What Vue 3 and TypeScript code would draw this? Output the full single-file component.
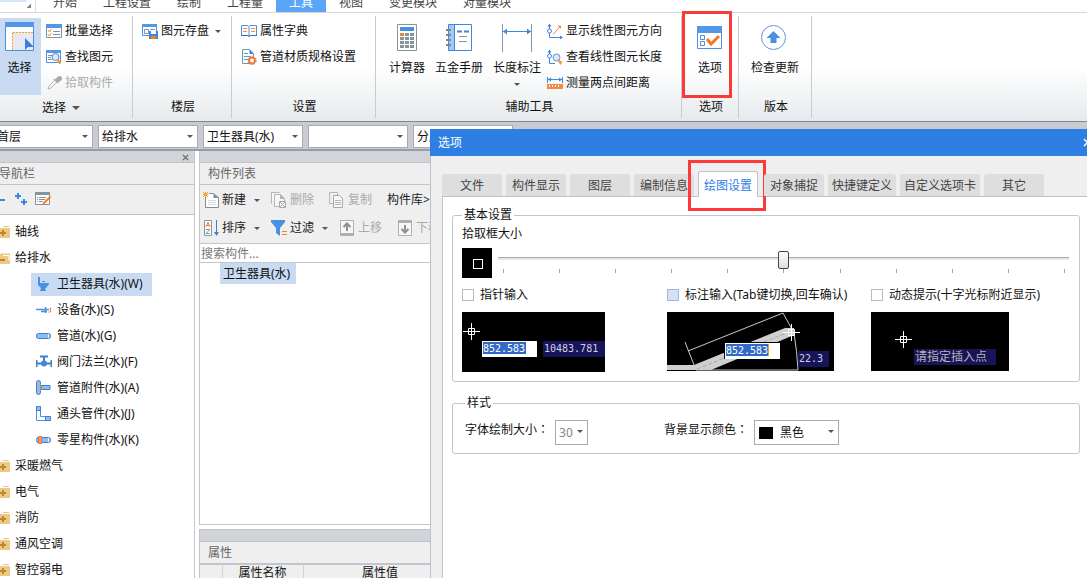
<script setup lang="ts">
import { ref } from 'vue'

interface Item { icon: string; label: string; disabled?: boolean; drop?: boolean }

const menuTabs = ['开始', '工程设置', '绘制', '工程量', '工具', '视图', '变更模块', '对量模块']
const activeMenu = ref('工具')

const selectTools: Item[] = [
  { icon: 'batch', label: '批量选择' },
  { icon: 'find', label: '查找图元' },
  { icon: 'pick', label: '拾取构件', disabled: true },
]
const storeTools: Item[] = [{ icon: 'store', label: '图元存盘', drop: true }]
const settingTools: Item[] = [
  { icon: 'book', label: '属性字典' },
  { icon: 'spec', label: '管道材质规格设置' },
]
const bigTools: Item[] = [
  { icon: 'calc', label: '计算器' },
  { icon: 'manual', label: '五金手册' },
  { icon: 'length', label: '长度标注', drop: true },
]
const lineTools: Item[] = [
  { icon: 'direction', label: '显示线性图元方向' },
  { icon: 'linelen', label: '查看线性图元长度' },
  { icon: 'measure', label: '测量两点间距离' },
]

const combos = [
  { name: '楼层', value: '首层' },
  { name: '专业', value: '给排水' },
  { name: '构件类型', value: '卫生器具(水)' },
  { name: '构件', value: '' },
  { name: '分层', value: '分层1' },
]

const children: Item[] = [
  { icon: 'sanitary', label: '卫生器具(水)(W)' },
  { icon: 'device', label: '设备(水)(S)' },
  { icon: 'pipe', label: '管道(水)(G)' },
  { icon: 'valve', label: '阀门法兰(水)(F)' },
  { icon: 'fitting', label: '管道附件(水)(A)' },
  { icon: 'elbow', label: '通头管件(水)(J)' },
  { icon: 'misc', label: '零星构件(水)(K)' },
]
const tree = [
  { label: '轴线', open: false },
  { label: '给排水', open: true },
  { label: '采暖燃气', open: false },
  { label: '电气', open: false },
  { label: '消防', open: false },
  { label: '通风空调', open: false },
  { label: '智控弱电', open: false },
]
const activeChild = ref('卫生器具(水)(W)')

const listRows: Item[][] = [
  [
    { icon: 'new', label: '新建', drop: true },
    { icon: 'delete', label: '删除', disabled: true },
    { icon: 'copy', label: '复制', disabled: true },
    { icon: '', label: '构件库>>' },
  ],
  [
    { icon: 'sort', label: '排序', drop: true },
    { icon: 'filter', label: '过滤', drop: true },
    { icon: 'up', label: '上移', disabled: true },
    { icon: 'down', label: '下移', disabled: true },
  ],
]

const dialogTabs = ['文件', '构件显示', '图层', '编制信息', '绘图设置', '对象捕捉', '快捷键定义', '自定义选项卡', '其它']
const activeTab = ref('绘图设置')
const pickSize = ref(50)
</script>

<template>
  <svg class="defs" aria-hidden="true">
    <symbol id="i-select" viewBox="0 0 32 30">
      <path d="M1.500 .5h28v28h-28z" fill="#fff" stroke="#4a90e2" />
      <path d="M8 10h21v18H8z" fill="#e6e9f5" />
      <path d="M8.500 28V10.500H29" fill="none" stroke="#f5a623" stroke-dasharray="2 1" />
      <path d="M1 0h29v5H1z" fill="#5298e8" />
      <path d="M21 16v12l3-3h6z" fill="#3b7fd6" />
    </symbol>
    <symbol id="i-batch" viewBox="0 0 16 16">
      <path d="M.5 1.500h15v13H.5z" fill="#fff" stroke="#7c93a8" />
      <path d="M0 1h16v4H0z" fill="#5298e8" />
      <path d="M2 7l1.500 2L5.500 6M2 11l1.500 2 2-3" fill="none" stroke="#f08a3c" />
      <path d="M7 8.500h7M7 11.500h7" stroke="#7c93a8" />
    </symbol>
    <symbol id="i-find" viewBox="0 0 16 16">
      <path d="M.5 1.500h14v12H.5z" fill="#fff" stroke="#4a90e2" />
      <path d="M0 1h15v3H0z" fill="#5298e8" />
      <path d="M2 6.500h4M2 8.500h3M2 10.500h4" stroke="#7c93a8" />
      <circle cx="9.500" cy="8" r="3.500" fill="#dbe9fb" stroke="#5b83c4" />
      <path d="M12 10l3.500 3.500-2 2-2.500-3.500z" fill="#f59a23" />
    </symbol>
    <symbol id="i-pick" viewBox="0 0 16 16">
      <path d="M2 14l1-3 6-6 2 2-6 6z" fill="#f3f3f3" stroke="#b8b8b8" />
      <path d="M8 4l4 4M9.500 5L12 2.500q2-1.500 3 0t-1 3L11.500 7z" fill="#aaa" stroke="#aaa" stroke-width="1.500" />
    </symbol>
    <symbol id="i-store" viewBox="0 0 16 16">
      <path d="M.5 1.500h14v11H.5z" fill="#fff" stroke="#4a90e2" />
      <path d="M0 1h15v3H0z" fill="#5298e8" />
      <path d="M2.500 6.500h4v4h-4zM8 6.500h5" fill="none" stroke="#7c93a8" />
      <path d="M7 8h9v8H7z" fill="#3f86dc" />
      <path d="M9 8h5v3H9z" fill="#fff" />
      <path d="M9 13h5v3H9z" fill="#f58220" />
    </symbol>
    <symbol id="i-book" viewBox="0 0 16 16">
      <path d="M.5 2.500H7l1 1 1-1h6.500v10H9l-1 1-1-1H.5zM8 3.500v10" fill="#fff" stroke="#4a90e2" />
      <path d="M2 5.500h4M2 8.500h4M10 5.500h4M10 8.500h4" stroke="#ee8a45" />
      <path d="M0 12.500h7l1 1 1-1h7" fill="none" stroke="#2f6cc0" />
    </symbol>
    <symbol id="i-spec" viewBox="0 0 16 16">
      <path d="M1.500 .5h7l4 4v10h-11z" fill="#fff" stroke="#6f97b5" />
      <path d="M8.500 0v5h4z" fill="#3f86dc" />
      <path d="M3 4.500h4M3 7.500h6M3 10.500h4" stroke="#5298c8" />
      <circle cx="11" cy="11.500" r="3" fill="#fff" stroke="#f07a38" stroke-width="2" />
      <circle cx="11" cy="11.500" r="4.300" fill="none" stroke="#f07a38" stroke-dasharray="1.500 1.900" />
    </symbol>
    <symbol id="i-calc" viewBox="0 0 30 30">
      <path d="M5.500 1.500h19v26h-19z" fill="#fff" stroke="#8595a0" />
      <path d="M8 4h14v4H8z" fill="#4a90e2" />
      <path d="M8 10h4v3H8z" fill="#f58220" />
      <path d="M13 10h4v3h-4zM18 10h4v3h-4zM8 14h4v3H8zM13 14h4v3h-4zM18 14h4v3h-4zM8 18h4v3H8zM13 18h4v3h-4zM18 18h4v3h-4zM8 22h4v3H8zM13 22h4v3h-4zM18 22h4v3h-4z" fill="#86949c" />
    </symbol>
    <symbol id="i-manual" viewBox="0 0 30 30">
      <path d="M4.500 1.500h23v26h-23z" fill="#fff" stroke="#3f86dc" />
      <path d="M5 2h5v25H5z" fill="#a5c8f2" />
      <path d="M10.500 1v27" stroke="#3f86dc" />
      <path d="M2 7h5M2 12h5M2 17h5M2 22h5" stroke="#7a8790" stroke-width="2" />
      <path d="M13 8.500h5M20 8.500h5" stroke="#3f86dc" stroke-width="2" />
      <path d="M15 13.500h8M15 18.500h8" stroke="#86949c" />
    </symbol>
    <symbol id="i-length" viewBox="0 0 32 30">
      <path d="M1.500 1v28M30.500 1v28" stroke="#8b959c" />
      <path d="M2 8.500h28" stroke="#3b8ae0" />
      <path d="M2 8.500l4-3v6zM30 8.500l-4-3v6z" fill="#3b8ae0" />
    </symbol>
    <symbol id="i-direction" viewBox="0 0 16 16">
      <path d="M2.500 1v13.500H15" fill="none" stroke="#3f86dc" />
      <path d="M.5 3.500l2-3 2 3zM13 12.500l3 2-3 2z" fill="#3f86dc" />
      <circle cx="2.500" cy="8" r="2" fill="#fff" stroke="#3f86dc" />
      <path d="M6 11.500L13 3.500" stroke="#f08a45" />
      <path d="M10.500 2.500H14V6z" fill="#f08a45" />
    </symbol>
    <symbol id="i-linelen" viewBox="0 0 16 16">
      <path d="M2.500 1v13.500H8" fill="none" stroke="#3f86dc" />
      <path d="M.5 3.500l2-3 2 3z" fill="#3f86dc" />
      <circle cx="2.500" cy="7" r="2" fill="#fff" stroke="#3f86dc" />
      <circle cx="9.500" cy="8.500" r="3.500" fill="#dbe6fa" stroke="#6b8fd0" />
      <path d="M12 11l3.500 2-2 3-2.500-3.500z" fill="#f59a23" />
    </symbol>
    <symbol id="i-measure" viewBox="0 0 16 16">
      <path d="M.5 2v6M15.500 2v6M1 4.500h14" stroke="#3f86dc" />
      <path d="M1 4.500l3-2v4zM15 4.500l-3-2v4z" fill="#3f86dc" />
      <path d="M0 9h16v5H0z" fill="#f08a45" />
      <path d="M2 11h12" stroke="#fff" stroke-dasharray="1 2" stroke-width="2" />
    </symbol>
    <symbol id="i-options" viewBox="0 0 30 30">
      <path d="M2.500 3.500h24v22h-24z" fill="#fff" stroke="#4a90e2" />
      <path d="M2 3h25v7H2z" fill="#5298e8" />
      <path d="M5.500 12.500h4v4h-4zM5.500 18.500h4v4h-4z" fill="#fff" stroke="#4a90e2" />
      <path d="M12 16l4 5 8-8" fill="none" stroke="#f07828" stroke-width="3" />
    </symbol>
    <symbol id="i-update" viewBox="0 0 30 30">
      <circle cx="13.500" cy="14.500" r="12" fill="#fff" stroke="#5f95dc" />
      <path d="M13.500 8l7 7h-4v5h-6v-5h-4z" fill="#4a90e2" />
    </symbol>
    <symbol id="i-plus" viewBox="0 0 16 16">
      <path d="M1 5h6M4 2v6M7 11h6M10 8v6" stroke="#3f86dc" stroke-width="2" />
    </symbol>
    <symbol id="i-edit" viewBox="0 0 16 16">
      <path d="M.5 1.500h14v12H.5z" fill="#fff" stroke="#86949c" />
      <path d="M0 1h15v3H0z" fill="#86949c" />
      <path d="M2 6.500h1M4 6.500h7M2 8.500h1M4 8.500h6M2 10.500h1M4 10.500h4" stroke="#86949c" />
      <path d="M8 13L15.500 5.500" stroke="#f58220" stroke-width="2" />
    </symbol>
    <symbol id="i-folder" viewBox="0 0 16 16">
      <path d="M9 2.500h6" stroke="#eac27d" />
      <path d="M0 4h16v10H0z" fill="#eec986" />
      <path d="M6 9h6M9 6v6" stroke="#b98a2c" stroke-width="2" />
    </symbol>
    <symbol id="i-folder-open" viewBox="0 0 16 16">
      <path d="M7 3h9v10H7z" fill="#f5dfae" />
      <path d="M0 4h16v10H0z" fill="#eec986" />
      <path d="M9 5.500h6v5" fill="none" stroke="#fff" />
      <path d="M5 10h6" stroke="#b98a2c" stroke-width="2" />
    </symbol>
    <symbol id="i-sanitary" viewBox="0 0 16 16">
      <path d="M2 1h2v7H2zM2 7h11v1l-3 4H9l1 3H4l1-3-3-3zM6 5h3v1H6z" fill="#4a90e2" />
    </symbol>
    <symbol id="i-device" viewBox="0 0 16 16">
      <path d="M0 7.500h13M5 9.500h6M9.500 5v6" stroke="#4a90e2" stroke-width="1.500" />
      <path d="M12.500 10h2V5.500" fill="none" stroke="#f07a38" />
    </symbol>
    <symbol id="i-pipe" viewBox="0 0 16 16">
      <rect x=".5" y="5.500" width="14" height="5" rx="2" fill="#8fbdf0" stroke="#3f7fd0" />
      <path d="M12.500 6v4" stroke="#fff" />
    </symbol>
    <symbol id="i-valve" viewBox="0 0 16 16">
      <path d="M4 2.500h8M8 2v6M.5 6v7M15.500 6v7M1 9.500h14" stroke="#3f7fd0" stroke-width="2" />
      <circle cx="8" cy="9.500" r="3" fill="#3f86dc" />
    </symbol>
    <symbol id="i-fitting" viewBox="0 0 16 16">
      <rect x=".5" y=".5" width="4" height="14" rx="2" fill="#8fbdf0" stroke="#3f7fd0" />
      <path d="M5 5.500h9v4H5z" fill="#8fbdf0" stroke="#3f7fd0" />
      <path d="M4.500 4v7" stroke="#f07a38" />
    </symbol>
    <symbol id="i-elbow" viewBox="0 0 16 16">
      <path d="M.5 1.500h4v9h9v4H.5z" fill="#fff" stroke="#4a90e2" />
      <path d="M.5 .5h4v4h-4zM9.500 10.500h5v4h-5z" fill="#8fbdf0" stroke="#3f7fd0" />
    </symbol>
    <symbol id="i-misc" viewBox="0 0 16 16">
      <rect x=".5" y="5.500" width="14" height="5" rx="2" fill="#8fbdf0" stroke="#3f7fd0" />
      <path d="M2.500 4.500h3v7h-3z" fill="#f3a078" stroke="#e07840" />
      <path d="M12.500 6v4" stroke="#fff" />
    </symbol>
    <symbol id="i-new" viewBox="0 0 16 16">
      <path d="M2.500 1.500h8l5 4v10h-13z" fill="#fff" stroke="#7f8d96" />
      <path d="M10.500 1.500v4.500h5z" fill="#7f8d96" />
      <path d="M5 8.500h8M5 10.500h8M5 12.500h8" stroke="#d5d9dc" />
      <path d="M0 0h6v5H0z" fill="#efefef" />
      <path d="M0 0l5 5M5 0L0 5M2.500 0v5M0 2.500h5" stroke="#f5a623" />
    </symbol>
    <symbol id="i-delete" viewBox="0 0 16 16">
      <path d="M.5 11.500v-11h8M3.500 2.500h6l4 4v8h-10z" fill="#f7f7f7" stroke="#b5b5b5" />
      <path d="M9 2v5h5z" fill="#b5b5b5" />
      <path d="M8.500 9.500h6v6h-6zM9 10l5 5M14 10l-5 5" fill="#f7f7f7" stroke="#a9a9a9" />
    </symbol>
    <symbol id="i-copy" viewBox="0 0 16 16">
      <path d="M.5 11.500v-11h8v3M.5 11.500H4" fill="none" stroke="#b5b5b5" />
      <path d="M4.500 3.500h6l3 3v9h-9z" fill="#f7f7f7" stroke="#a9a9a9" />
      <path d="M6 8.500h6M6 10.500h6M6 12.500h6" stroke="#b5b5b5" />
    </symbol>
    <symbol id="i-sort" viewBox="0 0 16 16">
      <path d="M1.500 .5h7v15h-7z" fill="#fff" stroke="#86949c" />
      <path d="M3 7l2-5 2 5M4 5.500h2" fill="none" stroke="#f07a38" />
      <path d="M3 9.500h4l-4 4h4" fill="none" stroke="#86949c" />
      <path d="M13.500 0v13" stroke="#3b7fd6" />
      <path d="M11 12h5l-2.500 4z" fill="#3b7fd6" />
    </symbol>
    <symbol id="i-filter" viewBox="0 0 16 16">
      <path d="M0 0h14v2L9 8v8l-4-3V8L0 2z" fill="#4a90e2" />
      <path d="M11 11.500h5M11 14.500h5" stroke="#f58220" />
    </symbol>
    <symbol id="i-up" viewBox="0 0 16 16">
      <path d="M1.500 .5h13v14h-13z" fill="#f7f7f7" stroke="#b0b0b0" />
      <path d="M1 13h14v3H1z" fill="#b0b0b0" />
      <path d="M8 11V4M4.500 7L8 3.500 11.500 7" fill="none" stroke="#8f8f8f" stroke-width="2" />
    </symbol>
    <symbol id="i-down" viewBox="0 0 16 16">
      <path d="M1.500 .5h13v15h-13z" fill="#f7f7f7" stroke="#b0b0b0" />
      <path d="M1 0h14v3H1z" fill="#b0b0b0" />
      <path d="M8 5v7M4.500 9L8 12.500 11.500 9" fill="none" stroke="#8f8f8f" stroke-width="2" />
    </symbol>
    <symbol id="i-cross" viewBox="0 0 18 18">
      <path d="M1 9.500h17M9.500 1v17" stroke="#fff" />
      <path d="M6.500 6.500h6v6h-6z" fill="none" stroke="#fff" />
    </symbol>
  </svg>

  <div class="app">
    <nav class="menu">
      <div class="logo"></div>
      <button
        v-for="t in menuTabs" :key="t" class="menu-tab" :class="{ active: t === activeMenu }"
        @click="activeMenu = t"
      ><span>{{ t }}</span></button>
    </nav>

    <header class="ribbon">
      <section class="group g-select">
        <div class="tools">
          <button class="big pressed"><svg class="ic30"><use href="#i-select" /></svg>选择</button>
          <div class="stack">
            <button v-for="t in selectTools" :key="t.label" class="small" :disabled="t.disabled">
              <svg class="ic16"><use :href="'#i-' + t.icon" /></svg>{{ t.label }}
            </button>
          </div>
        </div>
        <h2>选择<i class="caret wide"></i></h2>
      </section>
      <section class="group g-store">
        <div class="tools">
          <div class="stack">
            <button v-for="t in storeTools" :key="t.label" class="small">
              <svg class="ic16"><use :href="'#i-' + t.icon" /></svg>{{ t.label }}<i class="caret"></i>
            </button>
          </div>
        </div>
        <h2>楼层</h2>
      </section>
      <section class="group g-setting">
        <div class="tools">
          <div class="stack">
            <button v-for="t in settingTools" :key="t.label" class="small">
              <svg class="ic16"><use :href="'#i-' + t.icon" /></svg>{{ t.label }}
            </button>
          </div>
        </div>
        <h2>设置</h2>
      </section>
      <section class="group g-aux">
        <div class="tools">
          <button v-for="t in bigTools" :key="t.label" class="big">
            <svg class="ic30"><use :href="'#i-' + t.icon" /></svg>{{ t.label }}<i v-if="t.drop" class="caret"></i>
          </button>
          <div class="stack">
            <button v-for="t in lineTools" :key="t.label" class="small">
              <svg class="ic16"><use :href="'#i-' + t.icon" /></svg>{{ t.label }}
            </button>
          </div>
        </div>
        <h2>辅助工具</h2>
      </section>
      <section class="group g-options">
        <div class="tools centered">
          <button class="big"><svg class="ic30"><use href="#i-options" /></svg>选项</button>
        </div>
        <h2>选项</h2>
        <span class="mark mark-ribbon"></span>
      </section>
      <section class="group g-version">
        <div class="tools centered">
          <button class="big"><svg class="ic30"><use href="#i-update" /></svg>检查更新</button>
        </div>
        <h2>版本</h2>
      </section>
    </header>

    <div class="combobar">
      <span v-for="c in combos" :key="c.name" class="combo">
        <select :aria-label="c.name"><option>{{ c.value }}</option></select>
      </span>
    </div>

    <main class="work">
      <aside class="nav">
        <div class="strip"><button class="close" aria-label="关闭导航栏"><svg viewBox="0 0 8 8"><path d="M1 1l6 6M7 1L1 7" stroke="#666" stroke-width="1.500" /></svg></button></div>
        <h3>导航栏</h3>
        <div class="nav-tools">
          <button aria-label="折叠"><svg class="ic16"><path d="M0 9h7" stroke="#3f86dc" stroke-width="2" /></svg></button>
          <button aria-label="展开"><svg class="ic16"><use href="#i-plus" /></svg></button>
          <button aria-label="编辑"><svg class="ic16"><use href="#i-edit" /></svg></button>
        </div>
        <ul class="tree">
          <li v-for="n in tree" :key="n.label">
            <button class="node"><svg class="ic16"><use :href="n.open ? '#i-folder-open' : '#i-folder'" /></svg>{{ n.label }}</button>
            <ul v-if="n.open">
              <li v-for="c in children" :key="c.label">
                <button class="leaf" :class="{ on: c.label === activeChild }" @click="activeChild = c.label">
                  <svg class="ic16"><use :href="'#i-' + c.icon" /></svg>{{ c.label }}
                </button>
              </li>
            </ul>
          </li>
        </ul>
      </aside>

      <div class="column">
        <section class="list-panel">
          <div class="strip"></div>
          <h3>构件列表</h3>
          <div class="list-tools">
            <div v-for="(row, i) in listRows" :key="i" class="list-row">
              <button v-for="t in row" :key="t.label" :disabled="t.disabled" :class="{ drop: t.drop }">
                <svg v-if="t.icon" class="ic16"><use :href="'#i-' + t.icon" /></svg>{{ t.label }}<i v-if="t.drop" class="caret"></i>
              </button>
            </div>
          </div>
          <input class="search" type="text" placeholder="搜索构件..." aria-label="搜索构件">
          <ul class="items"><li>卫生器具(水)</li></ul>
        </section>
        <section class="prop-panel">
          <div class="strip"></div>
          <h3>属性</h3>
          <table>
            <thead><tr><th class="c0"></th><th class="c1">属性名称</th><th class="c2">属性值</th><th></th></tr></thead>
          </table>
        </section>
      </div>
    </main>

    <div class="dialog" role="dialog" aria-label="选项">
      <div class="titlebar"><span>选项</span><button aria-label="关闭"><svg viewBox="0 0 10 10"><path d="M1 1l8 8M9 1L1 9" stroke="#fff" stroke-width="1.500" /></svg></button></div>
      <div class="tabs" role="tablist">
        <button
          v-for="t in dialogTabs" :key="t" role="tab" :aria-selected="t === activeTab"
          :class="{ active: t === activeTab }" @click="activeTab = t"
        >{{ t }}<span v-if="t === '绘图设置'" class="mark mark-tab"></span></button>
      </div>
      <div class="pane">
        <fieldset class="basic">
          <legend>基本设置</legend>
          <label class="pick-label" for="pick">拾取框大小</label>
          <div class="pick">
            <span class="pick-preview"><i></i></span>
            <div class="slider">
              <input id="pick" v-model="pickSize" type="range" min="0" max="100">
              <div class="ticks"><i v-for="n in 11" :key="n"></i></div>
            </div>
          </div>
          <div class="modes">
            <div>
              <label class="check"><input type="checkbox">指针输入</label>
              <svg class="demo" width="143" height="60" viewBox="0 0 143 60">
                <path d="M0 0h143v60H0z" />
                <use href="#i-cross" x="0" y="10" width="18" height="18" />
                <path d="M20 29h55v16H20z" fill="#fff" />
                <path d="M21 30h43v12H21z" fill="#316ac5" />
                <path d="M81 29h62v16H81z" fill="#17145a" />
                <text x="21" y="40" fill="#fff">852.583</text>
                <text x="82" y="40" fill="#d0d0e0">10483.781</text>
              </svg>
            </div>
            <div>
              <label class="check hot"><input type="checkbox">标注输入(Tab键切换,回车确认)</label>
              <svg class="demo" width="167" height="59" viewBox="0 0 167 59">
                <path d="M0 0h167v59H0z" />
                <path d="M0 53h27L118 16h9v7L44 58H0z" fill="#cfcfcf" />
                <path d="M30 57L122 20" stroke="#aaa" stroke-dasharray="4 2" />
                <path d="M18 30l11 28h102M21 39L116 1l11 20q3 18 4 37" fill="none" stroke="#c8c8c8" />
                <use href="#i-cross" x="115" y="11" width="18" height="18" />
                <path d="M57 30h57v17H57z" />
                <path d="M58 31h55v16H58z" fill="#fff" />
                <path d="M59 32h42v12H59z" fill="#316ac5" />
                <path d="M101.500 32v12" stroke="#e0a030" />
                <path d="M131 39h31v16h-31z" fill="#17145a" />
                <text x="59" y="42" fill="#fff">852.583</text>
                <text x="132" y="50" fill="#d0d0e0">22.3</text>
              </svg>
            </div>
            <div>
              <label class="check"><input type="checkbox">动态提示(十字光标附近显示)</label>
              <svg class="demo" width="138" height="59" viewBox="0 0 138 59">
                <path d="M0 0h138v59H0z" />
                <use href="#i-cross" x="23" y="18" width="18" height="18" />
                <path d="M43 37h82v16H43z" fill="#17145a" />
                <text class="cjk" x="44" y="49" fill="#b5b5b0">请指定插入点</text>
              </svg>
            </div>
          </div>
        </fieldset>
        <fieldset class="style">
          <legend>样式</legend>
          <div class="field font-field">
            <label for="fontsize">字体绘制大小<span class="colon">：</span></label>
            <span class="combo"><select id="fontsize" disabled><option>30</option></select></span>
          </div>
          <div class="field color-field">
            <label for="bgcolor">背景显示颜色<span class="colon">：</span></label>
            <span class="combo"><i class="swatch"></i><select id="bgcolor"><option>黑色</option></select></span>
          </div>
        </fieldset>
      </div>
    </div>
  </div>
</template>

<style>
body { overflow: hidden; }
</style>

<style scoped>
.defs { display: none; }
.app, .app * { box-sizing: border-box; }
.app {
  position: relative;
  display: flex;
  flex-direction: column;
  height: 100vh;
  overflow: hidden;
  background: #fff;
  color: #111;
  font: 12px/16px "Noto Sans", "Noto Sans CJK SC", sans-serif;
}
button, select, input { font: inherit; color: inherit; }
button { border: 0; padding: 0; background: none; text-align: left; white-space: nowrap; }
h2, h3 { margin: 0; font: inherit; }
ul { list-style: none; margin: 0; padding: 0; }
.ic16 { width: 16px; height: 16px; flex: none; }
.ic30 { width: 32px; height: 30px; flex: none; }
.caret { border: 3px solid transparent; border-top-color: #555; border-bottom: 0; flex: none; }
.caret.wide { border-width: 4px 4px 0; margin-left: 6px; }

.menu { display: flex; height: 12px; flex: none; overflow: hidden; color: #444; }
.logo { width: 40px; background: linear-gradient(#d5e6fb, #d5e6fb) 0 0 / 27px 2px no-repeat, linear-gradient(135deg, transparent 50%, #888 50%) 27px 4px / 4px 4px no-repeat, linear-gradient(#ddd, #ddd) 35px 0 / 1px 12px no-repeat; }
.menu-tab { display: flex; padding: 0 13px; }
.menu-tab span { margin-top: -5px; }
.menu-tab.active { background: #5aa5f7; color: #fff; }

.ribbon {
  display: flex;
  flex: none;
  padding: 3px 0;
  border-top: 1px solid #d6d6d6;
  border-bottom: 1px solid #85898e;
  background: linear-gradient(#fff 0 50%, #e6eaec);
}
.group { position: relative; display: flex; flex-direction: column; flex: none; border-right: 1px solid #c9cbcd; }
.tools { display: flex; padding-top: 1px; height: 80px; }
.tools.centered { justify-content: center; }
.group h2 { display: flex; align-items: center; justify-content: center; height: 22px; padding-left: 2px; }
.g-select { width: 133px; }
.g-select h2 { padding: 2px 10px 0 0; }
.g-store { width: 99px; }
.g-setting { width: 144px; }
.g-aux { width: 306px; }
.g-options { width: 57px; }
.g-version { width: 73px; }
.g-store .tools, .g-setting .tools, .g-aux .tools { padding-left: 9px; }
.g-aux .tools { gap: 2px; }
.stack { padding-top: 1px; }
.big { display: flex; flex-direction: column; align-items: center; padding: 5px 4px 0; margin-top: 1px; height: 77px; }
.big .ic30 { margin-bottom: 7px; }
.big .caret { margin-top: 7px; }
.big.pressed { width: 41px; background: #c9dbf2; padding: 4px 4px 0 2px; }
.big.pressed .ic30 { margin-bottom: 8px; }
.g-select .stack { margin-left: 5px; }
.small { display: flex; align-items: center; gap: 3px; height: 26px; }
.small .caret { margin-left: 3px; }
.small:disabled { color: #aaa; }
.mark { position: absolute; border: 3px solid #fb3a3a; pointer-events: none; }
.mark-ribbon { inset: -5px 6px 20px 0; }

.combobar { display: flex; flex: none; gap: 5px; margin-left: -7px; padding: 3px 0 1px; background: #c8cbd1; border-bottom: 2px solid #999ca5; }
.combo { position: relative; display: flex; width: 100px; height: 23px; background: #fff; border: 1px solid #a9abae; }
.combo::after { content: ""; position: absolute; right: 4px; top: 9px; border: 3px solid transparent; border-top-color: #555; border-bottom: 0; pointer-events: none; }
.combo select { appearance: none; width: 100%; border: 0; padding: 0 3px; background: transparent; outline: 0; }

.work { display: flex; flex: 1; min-height: 0; gap: 4px; }
.nav { width: 203px; margin-left: -8px; flex: none; border-right: 1px solid #c3c5cc; }
.strip { display: flex; justify-content: flex-end; height: 12px; background: #d3d4da; border-bottom: 1px solid #c0c2c8; }
.close { display: flex; margin: 3px 5px; width: 7px; height: 7px; }
h3 { height: 22px; line-height: 21px; padding-left: 8px; color: #666; background: #efefef; border-bottom: 1px solid #c3c5cc; }
.nav h3 { padding-left: 7px; }
.nav-tools { display: flex; height: 30px; padding: 6px 0 0 6px; background: #efefef; border-bottom: 1px solid #c3c5cc; }
.nav-tools button { display: flex; }
.nav-tools button:last-child { margin-left: 5px; }
.tree { padding-top: 4px; }
.node { display: flex; align-items: center; gap: 5px; height: 26px; padding-left: 2px; }
.tree ul li { display: flex; align-items: center; height: 26px; }
.leaf { display: flex; align-items: center; gap: 5px; height: 23px; margin-left: 39px; padding: 0 9px 0 5px; }
.leaf.on { background: #c9dbf2; }

.column { display: flex; flex-direction: column; flex: 1; min-width: 0; gap: 4px; }
.list-panel { display: flex; flex-direction: column; flex: 1; border: solid #c3c5cc; border-width: 0 1px 1px; }
.list-tools { padding: 1px 0 0 3px; height: 59px; background: #efefef; border-bottom: 1px solid #c3c5cc; color: #222; }
.list-row { display: flex; gap: 15px; height: 28px; }
.list-row button { display: flex; align-items: center; gap: 3px; }
.list-row .caret { margin-left: 5px; }
.list-row .drop { margin-right: -4px; }
.list-row button:disabled { color: #aaa; }
.search { height: 19px; border: 0; border-bottom: 1px solid #c3c5cc; padding: 0 1px; outline: 0; border-radius: 0; }
.search::placeholder { color: #777; opacity: 1; }
.items { display: flex; padding-left: 20px; }
.items li { height: 21px; line-height: 21px; padding: 0 6px 0 3px; background: #c9dbf2; }
.prop-panel { flex: none; height: 49px; border-left: 1px solid #c3c5cc; border-top: 1px solid #c3c5cc; }
.prop-panel table { width: 100%; border-collapse: collapse; table-layout: fixed; border-top: 1px solid #c3c5cc; background: #efefef; }
.prop-panel th { height: 16px; padding: 0; font-weight: normal; line-height: 16px; border-right: 1px solid #d0d2d6; }
.c0 { width: 22px; }
.c1 { width: 81px; }
.c2 { width: 154px; }

.dialog { position: absolute; left: 430px; top: 129px; right: 0; bottom: 0; display: flex; flex-direction: column; background: #efefef; border-left: 1px solid #b9c0d2; }
.titlebar { display: flex; align-items: center; justify-content: space-between; height: 27px; flex: none; margin-left: -1px; padding-left: 8px; background: #2d7fe3; color: #fff; }
.titlebar button { display: flex; width: 9px; height: 9px; margin-right: -5px; }
.tabs { display: flex; align-items: flex-end; gap: 4px; height: 40px; flex: none; margin-left: 11px; position: relative; z-index: 1; }
.tabs button { position: relative; min-width: 60px; height: 22px; padding: 2px 4px 0; text-align: center; color: #444; background: #dedede; border-radius: 3px 3px 0 0; }
.tabs .active { height: 26px; margin: 0 2px -1px 0; color: #2d7fe3; background: #fff; border: 1px solid #c0c2ca; border-bottom: 0; }
.mark-tab { inset: -12px -9px -14px -11px; }
.pane { flex: 1; margin-left: 11px; padding: 10px 7px 0 9px; border: solid #c0c2ca; border-width: 1px 0 0 1px; background: #fff; }
fieldset { margin: 0; min-width: 0; border: 1px solid #c3c5cc; border-radius: 3px; }
legend { height: 16px; padding: 0 2px; }
.basic { height: 175px; padding: 3px 10px 0 9px; }
.pick-label { display: block; }
.pick { display: flex; gap: 6px; padding-top: 6px; }
.pick-preview { width: 30px; height: 30px; padding: 11px 0 0 11px; background: #000; flex: none; }
.pick-preview i { display: block; width: 10px; height: 10px; border: 1px solid #fff; }
.slider { flex: 1; padding-top: 3px; }
.slider input { display: block; appearance: none; width: 100%; height: 18px; margin: 0; background: linear-gradient(#aaa 0 1px, #e4e8e6 1px 3px) 0 6px / 100% 3px no-repeat; outline: 0; }
.slider input::-webkit-slider-thumb { appearance: none; width: 11px; height: 18px; border: 1px solid #444; border-radius: 2px; background: linear-gradient(#fff, #ddd); }
.ticks { display: flex; justify-content: space-between; padding: 0 4px 0 5px; }
.ticks i { width: 1px; height: 4px; background: #a5a598; }
.modes { display: grid; grid-template-columns: 205px 204px 1fr; padding-top: 9px; }
.check { display: flex; align-items: center; gap: 6px; height: 16px; white-space: nowrap; }
.check input { appearance: none; width: 12px; height: 12px; margin: 0; border: 1px solid #bbb; background: #fff; }
.check.hot input { background: #d5e2f5; border-color: #9fb5dc; }
.demo { display: block; margin-top: 9px; font: 10px "DejaVu Sans Mono", monospace; }
.demo .cjk { font: 12px "Noto Sans CJK SC", sans-serif; }
.style { display: flex; height: 59px; margin-top: 13px; padding: 9px 10px 0 12px; }
.field { display: flex; gap: 6px; }
.field label { padding-top: 1px; }
.colon { font-family: "Noto Sans CJK TC", sans-serif; }
.field .combo { height: 25px; }
.font-field { width: 199px; }
.font-field .combo { width: 33px; }
.font-field select { color: #888; opacity: 1; }
.color-field .combo { width: 85px; }
.color-field select { padding-left: 25px; }
.swatch { position: absolute; left: 4px; top: 6px; width: 14px; height: 12px; background: #000; }
</style>
